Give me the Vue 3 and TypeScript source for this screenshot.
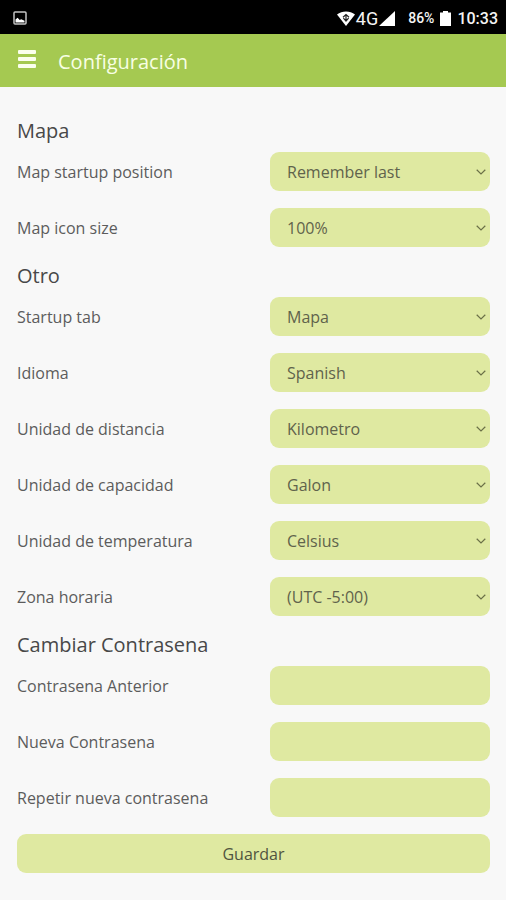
<script setup lang="ts">
import { reactive } from 'vue'

interface SelectField {
  id: string
  label: string
  options: string[]
}

interface PasswordField {
  id: string
  label: string
}

const groups: { title: string; fields: SelectField[] }[] = [
  {
    title: 'Mapa',
    fields: [
      { id: 'map-position', label: 'Map startup position', options: ['Remember last'] },
      { id: 'map-icon-size', label: 'Map icon size', options: ['100%'] },
    ],
  },
  {
    title: 'Otro',
    fields: [
      { id: 'startup-tab', label: 'Startup tab', options: ['Mapa'] },
      { id: 'language', label: 'Idioma', options: ['Spanish'] },
      { id: 'distance', label: 'Unidad de distancia', options: ['Kilometro'] },
      { id: 'capacity', label: 'Unidad de capacidad', options: ['Galon'] },
      { id: 'temperature', label: 'Unidad de temperatura', options: ['Celsius'] },
      { id: 'timezone', label: 'Zona horaria', options: ['(UTC -5:00)'] },
    ],
  },
]

const passwordFields: PasswordField[] = [
  { id: 'old-password', label: 'Contrasena Anterior' },
  { id: 'new-password', label: 'Nueva Contrasena' },
  { id: 'repeat-password', label: 'Repetir nueva contrasena' },
]

const values = reactive<Record<string, string>>({})
groups.forEach((group) => group.fields.forEach((field) => (values[field.id] = field.options[0])))
passwordFields.forEach((field) => (values[field.id] = ''))
</script>

<template>
  <div class="app">
    <div class="status-bar">
      <svg class="picture" width="14" height="14" viewBox="0 0 14 14">
        <rect x="1" y="1" width="12" height="12" rx="1" fill="none" stroke="#c4c4c4" stroke-width="1.5" />
        <path d="M2.5 11.5V8.5L4.6 6.8L6.7 9L8.2 8.2L11.5 9.8V11.5Z" fill="#fff" />
      </svg>
      <div class="signals">
        <svg width="18" height="15" viewBox="0 0 18 15">
          <path d="M0 3.4C5 -0.6 13 -0.6 18 3.4L9 15Z" fill="#fff" />
          <path d="M6 6.2L9 3.6L12 6.2M9 4V10M6.4 7.2L9 10L11.6 7.2" fill="none" stroke="#222" stroke-width="1.2" />
        </svg>
        <span class="network">4G</span>
        <svg width="16" height="15" viewBox="0 0 16 15">
          <path d="M0 15L16 0V15Z" fill="#fff" />
        </svg>
      </div>
      <span class="percent">86%</span>
      <svg class="battery" width="11" height="15" viewBox="0 0 11 15">
        <path d="M3 0H8V1.5H11V15H0V1.5H3Z" fill="#fff" />
      </svg>
      <span class="clock">10:33</span>
    </div>

    <header class="top-bar">
      <button class="menu" type="button" aria-label="Menu">
        <svg width="18" height="18" viewBox="0 0 18 18">
          <path d="M1 0H17Q18 0 18 1V3Q18 4 17 4H1Q0 4 0 3V1Q0 0 1 0ZM1 7H17Q18 7 18 8V10Q18 11 17 11H1Q0 11 0 10V8Q0 7 1 7ZM1 14H17Q18 14 18 15V17Q18 18 17 18H1Q0 18 0 17V15Q0 14 1 14Z" fill="#fbffee" />
        </svg>
      </button>
      <h1>Configuración</h1>
    </header>

    <form class="settings" @submit.prevent>
      <section v-for="group in groups" :key="group.title">
        <h2>{{ group.title }}</h2>
        <div v-for="field in group.fields" :key="field.id" class="row">
          <label :for="field.id">{{ field.label }}</label>
          <div class="select-box">
            <select :id="field.id" v-model="values[field.id]" class="field">
              <option v-for="option in field.options" :key="option">{{ option }}</option>
            </select>
            <svg class="chevron" width="10" height="6" viewBox="0 0 10 6">
              <path d="M0.7 0.8L5 4.9L9.3 0.8" fill="none" stroke="#6b7048" stroke-width="1.2" />
            </svg>
          </div>
        </div>
      </section>
      <section>
        <h2>Cambiar Contrasena</h2>
        <div v-for="field in passwordFields" :key="field.id" class="row">
          <label :for="field.id">{{ field.label }}</label>
          <input :id="field.id" v-model="values[field.id]" class="field" type="password" />
        </div>
      </section>
      <button class="save" type="submit">Guardar</button>
    </form>
  </div>
</template>

<style>
body {
  margin: 0;
  background: #f8f8f8;
}
</style>

<style scoped>
.app {
  font-family: 'Open Sans', 'Noto Sans', sans-serif;
  font-size: 16px;
  color: #5c5c5c;
}

.status-bar {
  display: flex;
  align-items: center;
  box-sizing: border-box;
  height: 34px;
  padding: 2px 8px 0 13px;
  background: #000;
  color: #f4f4f4;
  font-family: Roboto, sans-serif;
  font-weight: 500;
}

.signals {
  display: flex;
  align-items: center;
  gap: 1px;
  margin-left: auto;
}

.network {
  font-size: 18px;
  font-weight: 400;
}

.percent {
  margin-left: 13px;
  font-size: 14px;
}

.battery {
  margin: 0 6px;
}

.top-bar {
  display: flex;
  align-items: center;
  gap: 22px;
  box-sizing: border-box;
  height: 53px;
  padding: 2px 18px 0;
  background: #a5c951;
}

.menu {
  display: flex;
  padding: 0 0 6px;
  border: 0;
  background: none;
}

h1 {
  margin: 0;
  font-size: 20px;
  font-weight: 400;
  color: #f8ffe4;
}

.settings {
  padding: 32px 16px 28px 17px;
}

h2 {
  margin: 0 0 10px;
  padding-top: 1px;
  font-size: 20px;
  line-height: 22px;
  font-weight: 400;
  color: #484848;
}

.row {
  display: grid;
  grid-template-columns: 1fr 220px;
  align-items: center;
  margin-bottom: 17px;
}

.select-box {
  position: relative;
}

.field,
.save {
  display: block;
  box-sizing: border-box;
  width: 100%;
  height: 39px;
  border: 0;
  border-radius: 9px;
  background: #dfe9a1;
  font: inherit;
  color: #5f634c;
}

.field {
  appearance: none;
  padding: 0 17px;
}

.chevron {
  position: absolute;
  top: 17px;
  right: 4px;
  pointer-events: none;
}

.save {
  color: #50543f;
}
</style>
